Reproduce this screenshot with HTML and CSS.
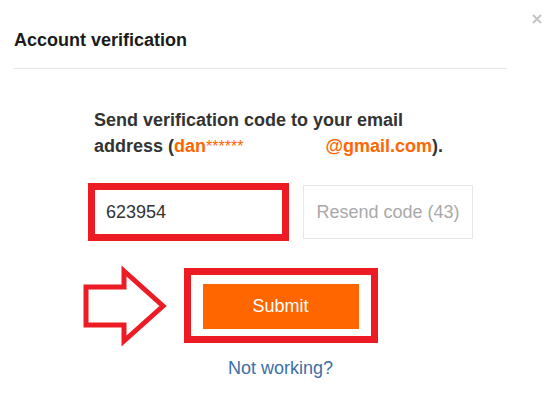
FILE: index.html
```
<!DOCTYPE html>
<html>
<head>
    <meta charset="utf-8">
    <title>Account verification</title>
    <link rel="stylesheet" href="styles.css">
</head>
<body>
<div class="modal">
    <svg class="close" width="10" height="10" viewBox="0 0 10 10">
        <path d="M1 1L9 9M9 1L1 9" stroke="#c4c4c4" stroke-width="2"/>
    </svg>
    <div class="head">
        <h1>Account verification</h1>
    </div>
    <div class="content">
        <p class="tip">Send verification code to your email address (<span class="mail">dan<span class="star">******</span></span><span class="hide"></span><span class="mail">@gmail.com</span>).</p>
        <div class="row">
            <div class="mark">
                <input class="code" type="text" value="623954">
            </div>
            <div class="resend">Resend code (43)</div>
        </div>
        <div class="submit-row">
            <div class="mark mark-btn">
                <svg class="arrow" width="90" height="84" viewBox="0 0 90 84">
                    <polygon points="4,22 42,22 42,6 81,41 42,76 42,60 4,60" fill="none" stroke="#ed1c24" stroke-width="5" stroke-linejoin="miter"/>
                </svg>
                <button class="submit">Submit</button>
            </div>
        </div>
        <a class="help" href="#">Not working?</a>
    </div>
</div>
</body>
</html>
```

FILE: styles.css
```
body {
    margin: 0;
    background: #fff;
    font-family: "Liberation Sans", Arial, sans-serif;
    color: #333;
}

.modal {
    position: relative;
    width: 560px;
    height: 418px;
}

.close {
    position: absolute;
    left: 532px;
    top: 14px;
}

.head {
    margin: 0 53px 0 14px;
    padding: 28px 0 16px;
    border-bottom: 1px solid #e6e6e6;
}

h1 {
    margin: 0;
    font-size: 18px;
    line-height: 24px;
    color: #1b1b1b;
}

.content {
    width: 385px;
    margin: 38px 0 0 88px;
}

.tip {
    margin: 0 0 23px 6px;
    width: 366px;
    font-size: 18px;
    line-height: 26px;
    font-weight: bold;
    color: #333;
}

.mail {
    color: #ff6600;
}

.star {
    font-weight: normal;
    font-size: 16px;
}

.hide {
    display: inline-block;
    width: 82px;
}

.row {
    display: flex;
    align-items: center;
    gap: 14px;
}

.mark {
    border: 7px solid #ed1c24;
}

.code {
    display: block;
    box-sizing: border-box;
    width: 187px;
    height: 44px;
    padding: 0 11px;
    border: 0;
    outline: none;
    font-family: inherit;
    font-size: 18px;
    color: #333;
}

.resend {
    box-sizing: border-box;
    width: 170px;
    height: 54px;
    border: 1px solid #e8e8e8;
    text-align: center;
    line-height: 52px;
    font-size: 18px;
    color: #a9a9a9;
}

.submit-row {
    display: flex;
    justify-content: center;
    margin-top: 27px;
}

.mark-btn {
    position: relative;
    padding: 9px 12px 7px;
}

.arrow {
    position: absolute;
    left: -109px;
    top: -10px;
}

.submit {
    display: block;
    width: 156px;
    height: 45px;
    border: 0;
    background: #ff6600;
    color: #fff;
    font-family: inherit;
    font-size: 18px;
}

.help {
    display: block;
    margin-top: 14px;
    text-align: center;
    font-size: 18px;
    line-height: 22px;
    color: #3b6ea8;
    text-decoration: none;
}
```
